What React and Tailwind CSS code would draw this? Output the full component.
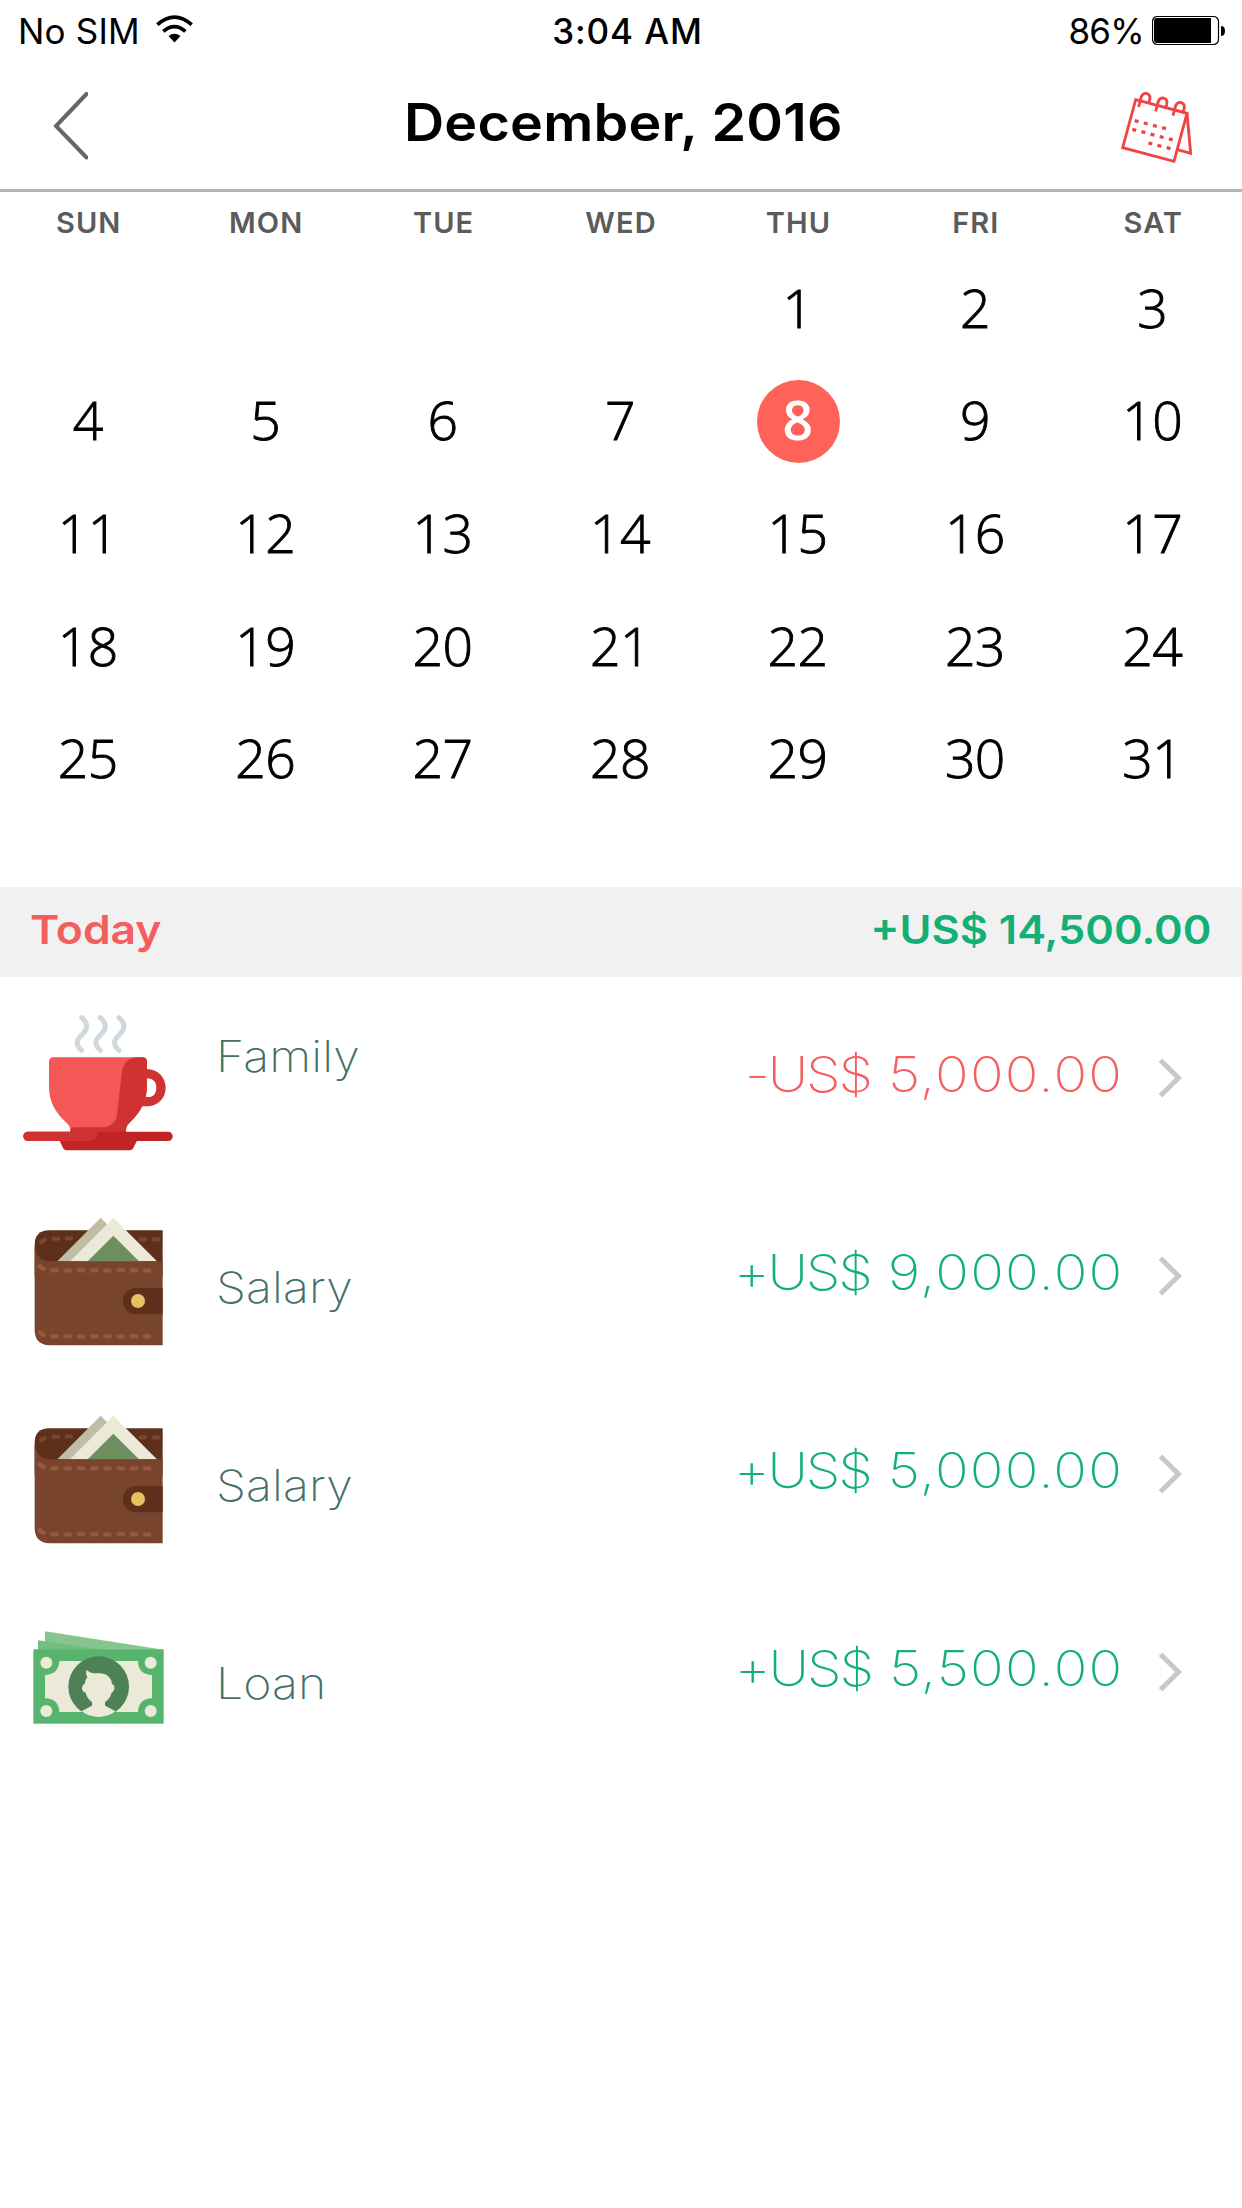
const WEEKDAYS = ['SUN', 'MON', 'TUE', 'WED', 'THU', 'FRI', 'SAT']
const FIRST_WEEKDAY = 4
const DAYS_IN_MONTH = 31
const SELECTED_DAY = 8

const transactions = [
  { id: 1, label: 'Family', currency: '-US$', value: '5,000.00', kind: 'expense', icon: CupIcon, top: 'pt-[23px]', labelTop: 'pt-[53px]' },
  { id: 2, label: 'Salary', currency: '+US$', value: '9,000.00', kind: 'income', icon: WalletIcon, top: 'pt-[25px]', labelTop: 'pt-[86px]' },
  { id: 3, label: 'Salary', currency: '+US$', value: '5,000.00', kind: 'income', icon: WalletIcon, top: 'pt-[25px]', labelTop: 'pt-[86px]' },
  { id: 4, label: 'Loan', currency: '+US$', value: '5,500.00', kind: 'income', icon: CashIcon, top: 'pt-[49px]', labelTop: 'pt-[86px]' },
]

function WifiIcon() {
  return (
    <svg viewBox="468 46 112 84" className="mt-[15px] ml-[16px] h-[28px] w-[37px]" fill="none" stroke="#000">
      <path d="M472 75Q524 29 576 75" strokeWidth="11" />
      <path d="M490 95Q524 66 557 95" strokeWidth="11" />
      <path d="M506 109Q524 95 542 109L524 129Z" fill="#000" stroke="none" />
    </svg>
  )
}

function BatteryIcon() {
  return (
    <svg viewBox="0 0 74 30" className="mt-[16px] ml-[8px] h-[30px] w-[74px]">
      <rect x="0.5" y="0.5" width="66" height="28" rx="5" fill="none" stroke="#000" strokeWidth="1.2" />
      <path d="M5 2H59V27H5Q2 27 2 24V5Q2 2 5 2Z" />
      <path d="M69 10Q73 10 73 15Q73 20 69 20Z" />
    </svg>
  )
}

function BackIcon() {
  return (
    <svg viewBox="0 0 36 68" className="h-[68px] w-[36px]" fill="none" stroke="#666" strokeWidth="4" strokeLinecap="round">
      <path d="M34.500 2L4 34L34.500 65.500" />
    </svg>
  )
}

function CalendarIcon() {
  return (
    <svg viewBox="240 270 219 222" className="mt-[3px] h-[74px] w-[73px]" fill="none" stroke="#f04343" strokeWidth="8.500">
      <path d="M287 299L441 340L402 484L248 443Z" />
      <path d="M441 340L452 460L412 449" />
      <path d="M296 321L304 290Q310 277 322 281Q333 286 329 300L326 309" />
      <path d="M347 334L355 304Q361 291 373 295Q384 300 380 314L377 323" />
      <path d="M399 347L407 317Q413 304 425 308Q436 313 432 327L429 336" />
      <g strokeWidth="10" strokeDasharray="12 16.300">
        <path d="M284 362L382 387" />
        <path d="M277 388L403 421" />
        <path d="M325 429L397 447" />
      </g>
    </svg>
  )
}

function CupIcon() {
  return (
    <svg viewBox="0 0 510 495" className="h-[165px] w-[170px]">
      <g fill="none" stroke="#cfd8dc" strokeWidth="15" strokeLinecap="round">
        <path d="M215 53C235 70 234 88 217 103C198 119 196 135 215 151" />
        <path d="M271 53C291 70 290 88 273 103C254 119 252 135 271 151" />
        <path d="M327 53C347 70 346 88 329 103C310 119 308 135 327 151" />
      </g>
      <path d="M410 207C444 207 467 232 467 263C467 295 443 319 411 319H385L405 291H415C432 291 439 278 439 263C439 247 430 235 410 235Z" fill="#d03232" />
      <path d="M130 172H397Q411 172 411 186V258C411 307 389 339 358 369Q348 378 348 388V400H181V388Q181 379 171 370C136 337 117 307 117 258V186Q117 172 130 172Z" fill="#f55656" />
      <path d="M380 172H397Q411 172 411 186V258C411 307 389 339 358 369Q348 378 348 388V400H181V392Q181 382 193 382H275Q318 380 322 338L335 220Q341 175 380 172Z" fill="#d03232" />
      <path d="M148 420H382L370 444Q366 451 359 451H170Q163 451 159 444Z" fill="#c22323" />
      <rect x="40" y="395" width="448" height="28" rx="14" fill="#c22323" />
      <path d="M54 395H265Q263 423 235 423H54A14 14 0 0 1 54 395Z" fill="#d03232" />
    </svg>
  )
}

function WalletIcon() {
  return (
    <svg viewBox="0 0 510 480" className="h-[160px] w-[170px]">
      <path d="M118 91H458V230H74V135Q74 91 118 91Z" fill="#5e2f1a" />
      <g fill="none" stroke="#7b452f" strokeWidth="13" strokeLinecap="round">
        <path d="M93 126L104 120M131 116H144M170 115H183M392 118H405M431 118H444" />
      </g>
      <path d="M142 184L272 53L402 184Z" fill="#bfbda5" />
      <path d="M180 184L310 53L441 184Z" fill="#ebead8" />
      <path d="M233 184L310 107L387 184Z" fill="#6d8f60" />
      <path d="M74 140Q80 181 118 184H458V436H118Q74 434 74 390Z" fill="#79442c" />
      <path d="M458 264H378A39 39 0 0 0 378 343H458Z" fill="#5e2f1a" />
      <circle cx="384" cy="303" r="21" fill="#e6c25f" />
      <g fill="none" stroke="#965842" strokeWidth="13" strokeLinecap="round">
        <path d="M89 199L101 207M89 397L101 405" />
        <path d="M127 211H419" strokeDasharray="13 26.700" />
        <path d="M127 409H419" strokeDasharray="13 26.700" />
      </g>
    </svg>
  )
}

function CashIcon() {
  return (
    <svg viewBox="0 0 510 360" className="h-[120px] w-[170px]">
      <path d="M105 34L460 89H105Z" fill="#85c58f" />
      <path d="M84 61L280 89H84Z" fill="#72bd82" />
      <rect x="70" y="88" width="391" height="223" fill="#57b46d" />
      <path d="M148 123H384Q384 163 426 165V235Q386 236 384 276H148Q146 236 105 235V165Q146 163 148 123Z" fill="#ebead8" />
      <g fill="#ebead8">
        <circle cx="109" cy="128" r="18" />
        <circle cx="422" cy="128" r="18" />
        <circle cx="109" cy="273" r="18" />
        <circle cx="422" cy="273" r="18" />
      </g>
      <circle cx="266" cy="200" r="91" fill="#4f8157" />
      <path d="M230 149Q239 160 258 160H272Q302 162 306 192Q315 196 313 208Q311 216 305 218Q300 236 285 246V257L317 274Q295 291 266 291Q237 291 214 274L246 257V246Q231 236 227 218Q215 214 216 203Q217 194 224 191Q225 180 232 171Q226 162 230 149Z" fill="#ebead8" />
    </svg>
  )
}

function ChevronIcon() {
  return (
    <svg viewBox="0 0 24 40" className="h-[40px] w-[24px]" fill="none" stroke="#c7c7cc" strokeWidth="5">
      <path d="M2.500 2.200L20.500 20L2.500 37.800" />
    </svg>
  )
}

function StatusBar() {
  return (
    <div className="grid h-[62px] grid-cols-3 text-[35px] leading-[62px]">
      <div className="flex pl-[18px]">
        <span className="tracking-[0.2px]">No SIM</span>
        <WifiIcon />
      </div>
      <span className="pl-[13px] text-center font-medium tracking-[0.9px]">3:04 AM</span>
      <div className="flex justify-end pr-[16px]">
        <span className="tracking-[-0.7px]">86%</span>
        <BatteryIcon />
      </div>
    </div>
  )
}

function Header() {
  return (
    <header className="flex h-[130px] items-center justify-between border-b-[3px] border-[#b5b5b5] pr-[49px] pl-[52px]">
      <BackIcon />
      <h1 className="scale-x-[1.07] pb-[5px] pl-[36px] text-[52px] font-[580] tracking-[0.2px]">December, 2016</h1>
      <CalendarIcon />
    </header>
  )
}

function Calendar() {
  const cells = [
    ...Array.from({ length: FIRST_WEEKDAY }, () => null),
    ...Array.from({ length: DAYS_IN_MONTH }, (_, i) => i + 1),
  ]

  return (
    <section className="mb-[72px]">
      <div className="grid h-[60px] grid-cols-7 text-center text-[29px] leading-[61px] font-[560] tracking-[1.1px] text-[#5b5b5b]">
        {WEEKDAYS.map((day) => (
          <span key={day}>{day}</span>
        ))}
      </div>
      <div className="grid h-[563px] grid-cols-7 grid-rows-5 font-['Open_Sans','Liberation_Sans',sans-serif] text-[53.5px] tracking-[-0.6px]">
        {cells.map((day, i) => (
          <div key={i} className="flex items-center justify-center">
            {day === SELECTED_DAY ? (
              <span className="mt-px size-[83px] rounded-full bg-[#ff6259] pr-[2px] text-center leading-[80px] font-semibold text-white">
                {day}
              </span>
            ) : (
              <span className="pr-[2px] pb-[2px] leading-[83px] font-light [-webkit-text-stroke:0.9px_black]">{day}</span>
            )}
          </div>
        ))}
      </div>
    </section>
  )
}

function TransactionRow({ item }) {
  const Icon = item.icon
  const amountColor = item.kind === 'expense' ? 'text-[#f65f5f]' : 'text-[#12b076]'

  return (
    <li className="flex h-[198px] pr-[60px] pl-[10px]">
      <div className={item.top}>
        <Icon />
      </div>
      <span className={`${item.labelTop} ml-[36px] origin-left scale-x-[1.12] text-[43px] leading-[53px] font-[220] tracking-[0.1px] text-[#447068]`}>
        {item.label}
      </span>
      <span className={`ml-auto origin-right scale-x-[1.125] pt-[67px] text-[49.5px] leading-[61px] font-[230] tracking-[1.1px] ${amountColor}`}>
        <span className="tracking-[-1.9px]">{item.currency}</span> {item.value}
      </span>
      <div className="ml-[35px] pt-[80.5px]">
        <ChevronIcon />
      </div>
    </li>
  )
}

export default function App() {
  return (
    <div className="min-h-[2208px] bg-white font-['Inter','Liberation_Sans',sans-serif] text-black">
      <StatusBar />
      <Header />
      <Calendar />
      <div className="flex h-[90px] items-center justify-between bg-[#f1f1f1] pr-[31px] pb-[5px] pl-[30px] text-[40px] font-[580]">
        <span className="origin-left scale-x-[1.11] text-[#f35f5f]">Today</span>
        <span className="origin-right scale-x-[1.085] text-[#12b076]">+US$ 14,500.00</span>
      </div>
      <ul>
        {transactions.map((item) => (
          <TransactionRow key={item.id} item={item} />
        ))}
      </ul>
    </div>
  )
}
